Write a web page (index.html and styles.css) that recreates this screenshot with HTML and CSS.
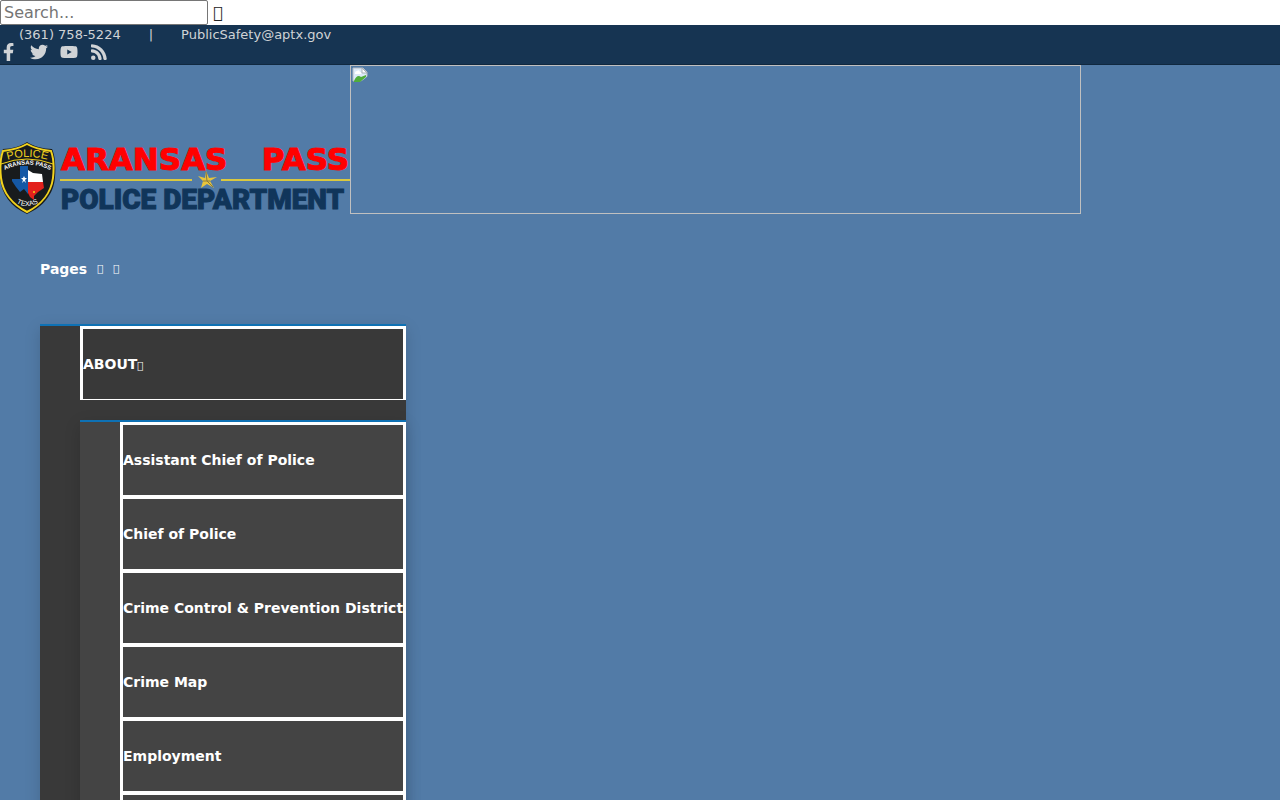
FILE: index.html
```html
<!DOCTYPE html>
<html lang="en">
<head>
<meta charset="UTF-8" />
<meta name="viewport" content="width=device-width, initial-scale=1.0"/>
<title>Aransas Pass Police Department</title>
<link rel="stylesheet" href="styles.css">
</head>

<body>
<form class="search">
<input type="text" class="search-input" placeholder="Search..." aria-label="Search" />
<button type="button" class="search-button" aria-label="Submit search">&#xf107;</button>
</form>

<div class="topbar">
<div class="contact">
<a href="#">(361) 758-5224</a>
<span>|</span>
<a href="#">PublicSafety@aptx.gov</a>
</div>
<div class="social">
<a href="#" aria-label="Facebook">
<svg viewBox="0 0 320 512"><path d="M279.14 288l14.22-92.66h-88.91v-60.13c0-25.35 12.42-50.06 52.24-50.06h40.42V6.26S260.43 0 225.36 0c-73.22 0-121.08 44.38-121.08 124.72v70.62H22.89V288h81.39v224h100.17V288z"/></svg>
</a>
<a href="#" aria-label="Twitter">
<svg viewBox="0 0 512 512"><path d="M459.37 151.716c.325 4.548.325 9.097.325 13.645 0 138.72-105.583 298.558-298.558 298.558-59.452 0-114.68-17.219-161.137-47.106 8.447.974 16.568 1.299 25.34 1.299 49.055 0 94.213-16.568 130.274-44.832-46.132-.975-84.792-31.188-98.112-72.772 6.498.974 12.995 1.624 19.818 1.624 9.421 0 18.843-1.3 27.614-3.573-48.081-9.747-84.143-51.98-84.143-102.985v-1.299c13.969 7.797 30.214 12.67 47.431 13.319-28.264-18.843-46.781-51.005-46.781-87.391 0-19.492 5.197-37.36 14.294-52.954 51.655 63.675 129.3 105.258 216.365 109.807-1.624-7.797-2.599-15.918-2.599-24.04 0-57.828 46.782-104.934 104.934-104.934 30.213 0 57.502 12.67 76.67 33.137 23.715-4.548 46.456-13.32 66.599-25.34-7.798 24.366-24.366 44.833-46.132 57.827 21.117-2.273 41.584-8.122 60.426-16.243-14.292 20.791-32.161 39.308-52.628 54.253z"/></svg>
</a>
<a href="#" aria-label="YouTube">
<svg viewBox="0 0 576 512"><path fill-rule="evenodd" d="M549.655 124.083c-6.281-23.65-24.787-42.276-48.284-48.597C458.781 64 288 64 288 64S117.22 64 74.629 75.486c-23.497 6.322-42.003 24.947-48.284 48.597-11.412 42.867-11.412 132.305-11.412 132.305s0 89.438 11.412 132.305c6.281 23.65 24.787 41.5 48.284 47.821C117.22 448 288 448 288 448s170.78 0 213.371-11.486c23.497-6.321 42.003-24.171 48.284-47.821 11.412-42.867 11.412-132.305 11.412-132.305s0-89.438-11.412-132.305zM232 338V175l143 81z"/></svg>
</a>
<a href="#" aria-label="RSS">
<svg viewBox="0 0 448 512"><circle cx="64" cy="416" r="64"/><path d="M24 32h-1C10 32 0 43 0 56v48c0 13 10 23 23 24 179 9 321 152 330 329 0 13 11 23 24 23h48c13 0 24-11 23-25C436 226 254 44 24 32z"/><path d="M25 176c-14-1-25 10-25 24v48c0 12 10 23 22 24 111 7 179 77 186 186 1 12 11 22 24 22h48c14 0 25-11 24-25C295 300 180 185 25 176z"/></svg>
</a>
</div>
</div>

<header class="header">
<a href="#" class="logo" aria-label="Home">
<svg width="350" height="72" viewBox="0 0 350 72">
  <!-- shoulder patch -->
  <path d="M27 0C33 4 43 7 52 7C55 13 56 25 55 35C54 52 43 65 27 72C11 65 1 52 0 35C-1 25 0 13 3 7C12 7 21 4 27 0Z" fill="#181b1d"/>
  <path d="M27 2C34 6 43 8 51 9C54 17 54 27 53 36C51 51 41 63 27 70C13 63 3 51 1 36C0 27 0 17 3 9C11 8 20 6 27 2Z" fill="none" stroke="#f2d31d" stroke-width="2"/>
  <path d="M1 22Q27 12 53 22" fill="none" stroke="#f2d31d" stroke-width="1"/>
  <path id="arcPolice" d="M4 19Q27 11 51 19" fill="none"/>
  <path id="arcCity" d="M3 29Q27 16 52 29" fill="none"/>
  <path id="arcState" d="M15 60Q27 68 40 60" fill="none"/>
  <text class="patch-police"><textPath href="#arcPolice" startOffset="50%">POLICE</textPath></text>
  <text class="patch-city"><textPath href="#arcCity" startOffset="50%">ARANSAS PASS</textPath></text>
  <text class="patch-state"><textPath href="#arcState" startOffset="50%">TEXAS</textPath></text>
  <path d="M20 24H28V52L24 47L20 50L16 45L12 39L12 37H20Z" fill="#1558a5"/>
  <path d="M28 28L33 31L42 32L43 40H28Z" fill="#fff"/>
  <path d="M28 40H43L44 46L38 50L34 54L34 58L30 55L28 51Z" fill="#e3211c"/>
  <path d="M24 34l1 2h2l-2 2 1 3-2-2-2 2 1-3-2-2h2z" fill="#fff"/>
  <circle cx="34" cy="50" r="1" fill="#f2d31d"/>
  <!-- wordmark -->
  <text class="word-city" x="61" y="28">ARANSAS</text>
  <text class="word-city word-end" x="349" y="28">PASS</text>
  <path d="M60 38H192M221 38H350" stroke="#dac83f" stroke-width="2"/>
  <path d="M206 29L209 36L217 35L210 39L214 46L207 42L201 46L203 39L198 34L205 36Z" fill="#e8c53b"/>
  <path d="M206 30L207 39L210 39M207 39L213 45M207 39L203 39" fill="none" stroke="#8a7a3c" stroke-width="1"/>
  <text class="word-dept" x="61" y="67">POLICE DEPARTMENT</text>
</svg>
</a>
<div class="banner">
<svg width="16" height="16" viewBox="0 0 16 16">
  <path d="M1 1H11L15 5V14H1Z" fill="#dce9f7" stroke="#b5bcc3"/>
  <path d="M2 14Q5 7 9 10L14 8V10L8 15H2Z" fill="#50ad3b"/>
  <path d="M3 6q0-2 2-2q2-2 3 1q2 0 1 2H3z" fill="#fff"/>
  <path d="M10 1V6H15Z" fill="#fff" stroke="#aab2b9"/>
  <path d="M7 16L16 9V16Z" fill="#527ba7"/>
</svg>
</div>
</header>

<nav class="nav">
<a href="#" class="pages">Pages <span class="glyph">&#xf107;</span> <span class="glyph">&#xf0c9;</span></a>
<ul class="menu">
<li>
<a href="#" class="menu-link">ABOUT<span class="glyph">&#xf107;</span></a>
<ul class="submenu">
<li><a href="#" class="menu-link">Assistant Chief of Police</a></li>
<li><a href="#" class="menu-link">Chief of Police</a></li>
<li><a href="#" class="menu-link">Crime Control &amp; Prevention District</a></li>
<li><a href="#" class="menu-link">Crime Map</a></li>
<li><a href="#" class="menu-link">Employment</a></li>
<li><a href="#" class="menu-link">&nbsp;</a></li>
</ul>
</li>
</ul>
</nav>
</body>
</html>
```

FILE: styles.css
```css
* {
  box-sizing: border-box;
}

body {
  margin: 0;
  font-family: "DejaVu Sans", sans-serif;
  font-size: 16px;
  background-color: #527ba7;
}

a {
  color: inherit;
  text-decoration: none;
}

.search {
  display: flex;
  align-items: center;
  gap: 5px;
  height: 25px;
  background-color: #fff;
}

.search-input {
  width: 208px;
  height: 25px;
  padding: 2px 3px;
  border: 1px solid #767676;
  border-radius: 2px;
  font: inherit;
}

.search-button {
  padding: 0;
  border: 0;
  background: none;
  color: #222;
  font: inherit;
}

.topbar {
  height: 40px;
  background-color: #163452;
  border-bottom: 1px solid #10283f;
  color: #d0d3d6;
  font-size: 13px;
}

.contact {
  display: flex;
  gap: 28px;
  padding: 2px 0 0 19px;
  line-height: 16px;
}

.social {
  display: flex;
  gap: 12px;
}

.social a {
  display: flex;
  justify-content: center;
  width: 18px;
}

.social svg {
  height: 18px;
  fill: #d0d3d6;
}

.header {
  display: flex;
  align-items: flex-end;
}

.logo svg {
  display: block;
}

.banner {
  width: 731px;
  height: 149px;
  padding: 1px;
  border: 1px solid #c0c0c0;
}

.patch-police,
.patch-city,
.patch-state {
  font-family: "Liberation Sans", sans-serif;
  text-anchor: middle;
  fill: #fff;
}

.patch-police {
  font-size: 11px;
  fill: #f2d31d;
}

.patch-city {
  font-size: 6px;
  font-weight: bold;
}

.patch-state {
  font-size: 7px;
}

.word-city {
  font-size: 31px;
  font-weight: bold;
  fill: #f00;
  stroke: #f00;
  stroke-width: 1px;
}

.word-end {
  text-anchor: end;
}

.word-dept {
  font-family: Roboto, sans-serif;
  font-size: 28px;
  font-weight: 900;
  fill: #10355a;
  stroke: #10355a;
  stroke-width: 1px;
}

.nav {
  padding: 20px 0 0 40px;
  color: #fff;
  font-size: 14px;
  font-weight: bold;
}

.pages {
  display: flex;
  gap: 10px;
  line-height: 70px;
}

.glyph {
  font-size: 10px;
  font-weight: normal;
}

.menu,
.submenu {
  margin: 20px 0 0;
  padding: 0 0 0 40px;
  border-top: 2px solid #0e71b4;
  list-style: none;
  box-shadow: 0 5px 15px rgba(0, 0, 0, 0.15);
}

.menu {
  width: max-content;
  background-color: #393939;
}

.submenu {
  background-color: #444;
}

.menu-link {
  display: block;
  border: 3px solid #fff;
  border-bottom-width: 1px;
  line-height: 70px;
}

.menu-link .glyph {
  line-height: 1;
}
```
